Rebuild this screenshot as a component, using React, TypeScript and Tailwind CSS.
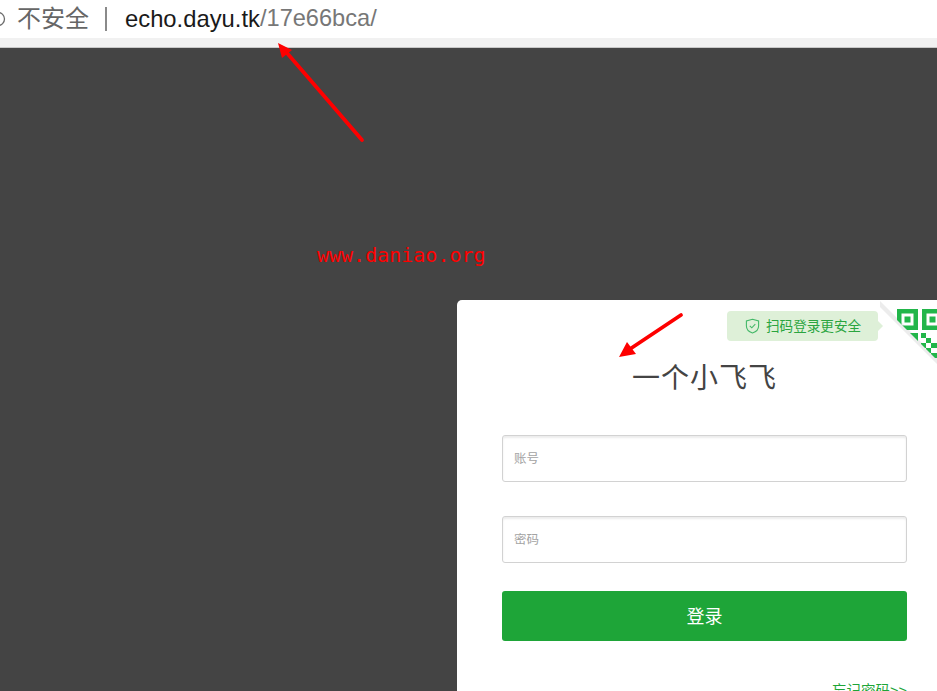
import React from 'react';

const cjk = "font-['Liberation_Sans','Noto_Sans_CJK_SC',sans-serif]";

// Red annotation arrow drawn over the screenshot
const Arrow = ({ x1, y1, x2, y2, head }: { x1: number; y1: number; x2: number; y2: number; head: string }) => (
  <g>
    <line x1={x1} y1={y1} x2={x2} y2={y2} stroke="#fe0000" strokeWidth="3.8" strokeLinecap="round" />
    <polygon points={head} fill="#fe0000" />
  </g>
);

const QrCorner = () => (
  <svg className="absolute top-0 left-[423px]" width="57" height="70" viewBox="0 0 57 70">
    <defs>
      <clipPath id="qr">
        <polygon points="0,0 57,0 57,60 0,3" />
      </clipPath>
    </defs>
    <polygon points="0,1 57,58 57,64 0,7" fill="#ececec" />
    <g clipPath="url(#qr)" fill="#22b64a">
      <path fillRule="evenodd" d="M17 9h21v21h-21zM21.500 13.500v12h12v-12z" />
      <rect x="24.500" y="16.500" width="6" height="6" />
      <path fillRule="evenodd" d="M42 9h21v21h-21zM46.500 13.500v12h12v-12z" />
      <rect x="49.500" y="16.500" width="6" height="6" />
      <rect x="17" y="33" width="21" height="6" />
      <rect x="28" y="39" width="10" height="9" />
      <rect x="41" y="33" width="5" height="5" />
      <rect x="46" y="38" width="5" height="5" />
      <rect x="41" y="43" width="5" height="5" />
      <rect x="51" y="43" width="6" height="5" />
      <rect x="46" y="48" width="5" height="5" />
      <rect x="51" y="53" width="6" height="5" />
    </g>
  </svg>
);

const Field = ({ label }: { label: string }) => (
  <div className="h-[47px] rounded-[3px] border border-[#d2d2d2] bg-white shadow-[inset_0_2px_2px_rgba(0,0,0,0.08)] flex items-center pl-[11px]">
    <span className="text-[12.5px] pt-[1px] text-[#a3a3a3]">{label}</span>
  </div>
);

export default function App() {
  return (
    <div className={`relative w-[937px] h-[691px] overflow-hidden flex flex-col bg-[#444444] ${cjk}`}>
      {/* Browser address bar */}
      <div className="h-[38px] bg-white flex items-center shrink-0">
        <svg className="-ml-[10px] mr-[11px]" width="16" height="16" viewBox="0 0 16 16" fill="none">
          <circle cx="8" cy="8" r="6.5" stroke="#6b6b6b" strokeWidth="1.3" />
          <path d="M8 7v4M8 4.5v1" stroke="#6b6b6b" strokeWidth="1.3" />
        </svg>
        <span className="text-[24px] leading-none text-[#666666] -mt-[1px]">不安全</span>
        <span className="w-[2px] h-[24px] bg-[#8a8a8a] ml-[16px] mr-[18px]" />
        <span className="text-[23.8px] leading-none text-[#1a1a1a] -mt-[1px]">echo.dayu.tk</span>
        <span className="text-[23.6px] leading-none text-[#777777] -mt-[1px]">/17e66bca/</span>
      </div>
      <div className="h-[10px] bg-[#f1f1f1] border-b border-[#c8c8c8] shrink-0" />

      {/* Dark page with login card */}
      <div className="flex-1 pl-[457px] pt-[252px]">
        <div className="relative w-[520px] h-[500px] bg-white rounded-[5px]">
          <QrCorner />
          <div className="absolute left-[270px] top-[11px] w-[151px] h-[30px] rounded-[4px] bg-[#def0d8] flex items-center pl-[18px] gap-[6px]">
            <svg width="15" height="16" viewBox="0 0 15 16" fill="none">
              <path d="M7.5 1.2 13.6 3v5c0 3.4-2.6 5.8-6.1 6.9C4 13.8 1.4 11.4 1.4 8V3z" stroke="#43b868" strokeWidth="1.1" />
              <path d="M4.8 7.8l2 2 3.5-3.6" stroke="#43b868" strokeWidth="1.1" />
            </svg>
            <span className="text-[13.6px] leading-none pt-[1px] text-[#2aa53f] whitespace-nowrap">扫码登录更安全</span>
            <span className="absolute -right-[5px] top-[10px] w-0 h-0 border-y-[5px] border-y-transparent border-l-[5px] border-l-[#def0d8]" />
          </div>

          <div className="flex flex-col pl-[45px] w-[450px]">
            <h1 className="mt-[60px] h-[38px] text-center text-[28px] leading-[38px] font-normal text-[#444444] tracking-[1px]">一个小飞飞</h1>
            <div className="mt-[37px] flex flex-col gap-[34px]">
              <Field label="账号" />
              <Field label="密码" />
            </div>
            <button className="mt-[28px] h-[50px] pt-[2px] rounded-[3px] bg-[#1ea538] text-white text-[18px]">登录</button>
            <div className="mt-[40px] text-right text-[14.5px] leading-[20px] text-[#1ea538]">忘记密码&gt;&gt;</div>
          </div>
        </div>
      </div>

      {/* Annotations on top of the screenshot */}
      <span className="absolute left-[317px] top-[242px] text-[20px] leading-[26px] text-[#fe0000] font-['DejaVu_Sans_Mono',monospace]">www.daniao.org</span>
      <svg className="absolute inset-0 pointer-events-none" width="937" height="691" viewBox="0 0 937 691">
        <Arrow x1={362} y1={140} x2={287} y2={53} head="278,43 292,50 282,58" />
        <Arrow x1={681} y1={315} x2={630} y2={349} head="619,357 627,342 636,354" />
      </svg>
    </div>
  );
}
